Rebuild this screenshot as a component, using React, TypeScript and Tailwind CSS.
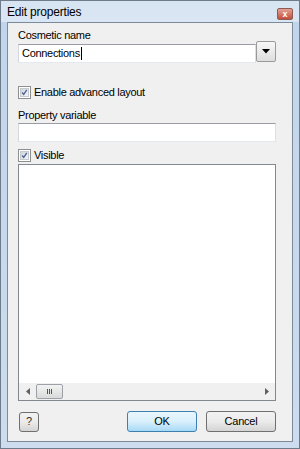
import React from "react";

const font = { fontFamily: '"Liberation Sans", Arial, sans-serif' };

const CheckBox: React.FC = () => (
  <span className="relative flex h-[13px] w-[13px] shrink-0 items-center justify-center border border-[#8e8f8f] bg-white">
    <span className="flex h-[9px] w-[9px] items-center justify-center border border-[#c6cbd2] bg-gradient-to-br from-[#cdd4dc] to-[#f4f6f8]">
      <svg width="9" height="9" viewBox="0 0 9 9">
        <path d="M1.5 4.5 L3.5 7 L7.5 1.2" stroke="#4b5f8f" strokeWidth="1.6" fill="none" />
      </svg>
    </span>
  </span>
);

const WinButton: React.FC<{ label: string; w: string; focused?: boolean }> = ({ label, w, focused }) => (
  <button
    className={`${w} h-[21px] rounded-[3px] border text-[11px] tracking-[-0.2px] text-black ${
      focused
        ? "border-[#3c7fb1] bg-gradient-to-b from-[#eaf6fd] via-[#d9f0fc] to-[#a7d9f5]"
        : "border-[#707070] bg-gradient-to-b from-[#f2f2f2] via-[#ebebeb] to-[#d4d4d4]"
    }`}
  >
    {label}
  </button>
);

const TextBox: React.FC<{ className?: string; children?: React.ReactNode }> = ({ className, children }) => (
  <div
    className={`${className ?? ""} border border-t-[#9a9ca3] border-l-[#d5d7de] border-r-[#dbdfe6] border-b-[#e3e9ef] bg-white`}
  >
    {children}
  </div>
);

export default function App() {
  return (
    <div
      className="flex h-[449px] w-[300px] flex-col border border-[#6d7b8b] bg-gradient-to-b from-[#c0d5ec] to-[#cddcee] text-black"
      style={font}
    >
      {/* title bar */}
      <div className="flex h-[21px] shrink-0 items-center justify-between bg-gradient-to-b from-[#d7e4f2] to-[#dae6f3] pl-[6px] pr-[6px]">
        <span className="mt-px text-[12px] tracking-[-0.2px] text-black">Edit properties</span>
        <span className="mt-[5px] flex h-[12px] w-[16px] items-center justify-center rounded-[2px] border border-[#8f5a52] bg-gradient-to-b from-[#e3a196] to-[#c24d3b] text-[9px] font-bold leading-none text-white">
          x
        </span>
      </div>

      {/* client area */}
      <div className="mx-[6px] mb-[6px] flex flex-1 flex-col border border-[#7d8a99] bg-[#f0f0f0] pb-[9px] pl-[10px] pr-[16px] pt-[6px] text-[11px] tracking-[-0.3px]">
        <div className="h-[12px] leading-[12px]">Cosmetic name</div>
        <div className="mt-[0px] flex h-[21px] items-start">
          <TextBox className="mt-[3px] flex h-[19px] w-[240px] items-center pl-[3px]">
            <span>Connections</span>
            <span className="ml-[1px] h-[13px] w-px bg-black" />
          </TextBox>
          <div className="flex h-[21px] w-[20px] items-center justify-center rounded-[2px] border border-[#9a9a9a] bg-gradient-to-b from-[#f7f7f7] to-[#dedede]">
            <svg width="8" height="5" viewBox="0 0 8 5">
              <path d="M0 0 H8 L4 4.5 Z" fill="#000" />
            </svg>
          </div>
        </div>

        <div className="mt-[24px] flex h-[13px] items-center gap-[3px]">
          <CheckBox />
          <span>Enable advanced layout</span>
        </div>

        <div className="mt-[9px] h-[14px] leading-[14px]">Property variable</div>
        <TextBox className="mt-px h-[19px] w-full" />

        <div className="mt-[7px] flex h-[13px] items-center gap-[3px]">
          <CheckBox />
          <span>Visible</span>
        </div>

        <div className="mt-[2px] flex h-[237px] flex-col border border-[#828790] bg-white">
          <div className="flex-1" />
          <div className="flex h-[17px] items-center bg-[#f0f0f0]">
            <div className="flex h-full w-[17px] items-center justify-center">
              <svg width="4" height="7" viewBox="0 0 4 7">
                <path d="M4 0 V7 L0 3.5 Z" fill="#606060" />
              </svg>
            </div>
            <div className="flex h-[15px] w-[27px] items-center justify-center gap-[1px] rounded-[2px] border border-[#9da0a6] bg-gradient-to-b from-[#f3f3f3] to-[#dadada]">
              <span className="h-[5px] w-px bg-[#555]" />
              <span className="h-[5px] w-px bg-[#555]" />
              <span className="h-[5px] w-px bg-[#555]" />
            </div>
            <div className="flex-1" />
            <div className="flex h-full w-[17px] items-center justify-center">
              <svg width="4" height="7" viewBox="0 0 4 7">
                <path d="M0 0 V7 L4 3.5 Z" fill="#606060" />
              </svg>
            </div>
          </div>
        </div>

        <div className="mt-[10px] flex items-center">
          <button className="ml-px h-[20px] w-[20px] rounded-[3px] border border-[#707070] bg-gradient-to-b from-[#f2f2f2] via-[#ebebeb] to-[#d4d4d4] text-[11px] text-[#333]">
            ?
          </button>
          <div className="flex-1" />
          <WinButton label="OK" w="w-[70px]" focused />
          <div className="w-[9px]" />
          <WinButton label="Cancel" w="w-[70px]" />
        </div>
      </div>
    </div>
  );
}
